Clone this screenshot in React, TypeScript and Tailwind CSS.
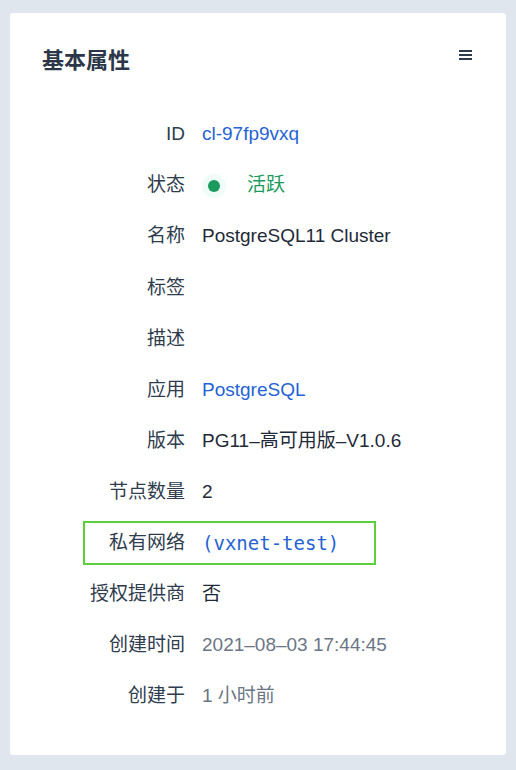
import type { ReactNode } from "react";

type Row = {
    label: string;
    value?: ReactNode;
    highlight?: boolean;
};

const rows: Row[] = [
    { label: "ID", value: <span className="text-[#2563d4]">cl-97fp9vxq</span> },
    {
        label: "状态",
        value: (
            <span className="flex items-center gap-[21px]">
                <span className="w-6 h-6 rounded-full bg-[#effcf7] flex items-center justify-center">
                    <span className="w-3 h-3 rounded-full bg-[#1b9a5d]" />
                </span>
                <span className="text-[#1b9a5d]">活跃</span>
            </span>
        ),
    },
    { label: "名称", value: "PostgreSQL11 Cluster" },
    { label: "标签" },
    { label: "描述" },
    { label: "应用", value: <span className="text-[#2563d4]">PostgreSQL</span> },
    { label: "版本", value: "PG11–高可用版–V1.0.6" },
    { label: "节点数量", value: "2" },
    {
        label: "私有网络",
        highlight: true,
        value: (
            <span className="text-[#2563d4] font-['DejaVu_Sans_Mono',monospace] text-[19px]">(vxnet-test)</span>
        ),
    },
    { label: "授权提供商", value: "否" },
    { label: "创建时间", value: <span className="text-[#6b7685]">2021–08–03 17:44:45</span> },
    { label: "创建于", value: <span className="text-[#6b7685]">1 小时前</span> },
];

function MenuIcon() {
    return (
        <svg className="w-[13px] h-[10px]" viewBox="0 0 13 10" fill="#2d3a4b">
            <rect x="0" y="0" width="13" height="2" />
            <rect x="0" y="4" width="13" height="2" />
            <rect x="0" y="8" width="13" height="2" />
        </svg>
    );
}

export default function App() {
    return (
        <div className="w-[516px] h-[770px] bg-[#dfe6ee] pt-[13px] px-[10px] font-['Liberation_Sans','Noto_Sans_CJK_SC',sans-serif]">
            <div className="w-[496px] h-[742px] bg-white rounded-[3px] pt-[33px] px-[32px]">
                {/* Header */}
                <div className="flex items-start justify-between">
                    <h2 className="text-[22px] leading-[30px] font-bold text-[#2b3748]">基本属性</h2>
                    <div className="pt-[4px] pr-[2px]">
                        <MenuIcon />
                    </div>
                </div>

                {/* Properties */}
                <div className="mt-[33px] ml-[41px] flex flex-col">
                    {rows.map((r) => (
                        <div key={r.label} className="h-[51.1px] flex items-center">
                            <div
                                className={`h-[44px] flex items-center border-2 ${r.highlight ? "w-[293px] border-[#5ccf3c]" : "border-transparent"
                                    }`}
                            >
                                <div className="w-[100px] text-right text-[19px] text-[#2f3c4d] shrink-0">{r.label}</div>
                                <div className="ml-[17px] text-[19px] text-[#1f2a38] whitespace-nowrap">{r.value}</div>
                            </div>
                        </div>
                    ))}
                </div>
            </div>
        </div>
    );
}
